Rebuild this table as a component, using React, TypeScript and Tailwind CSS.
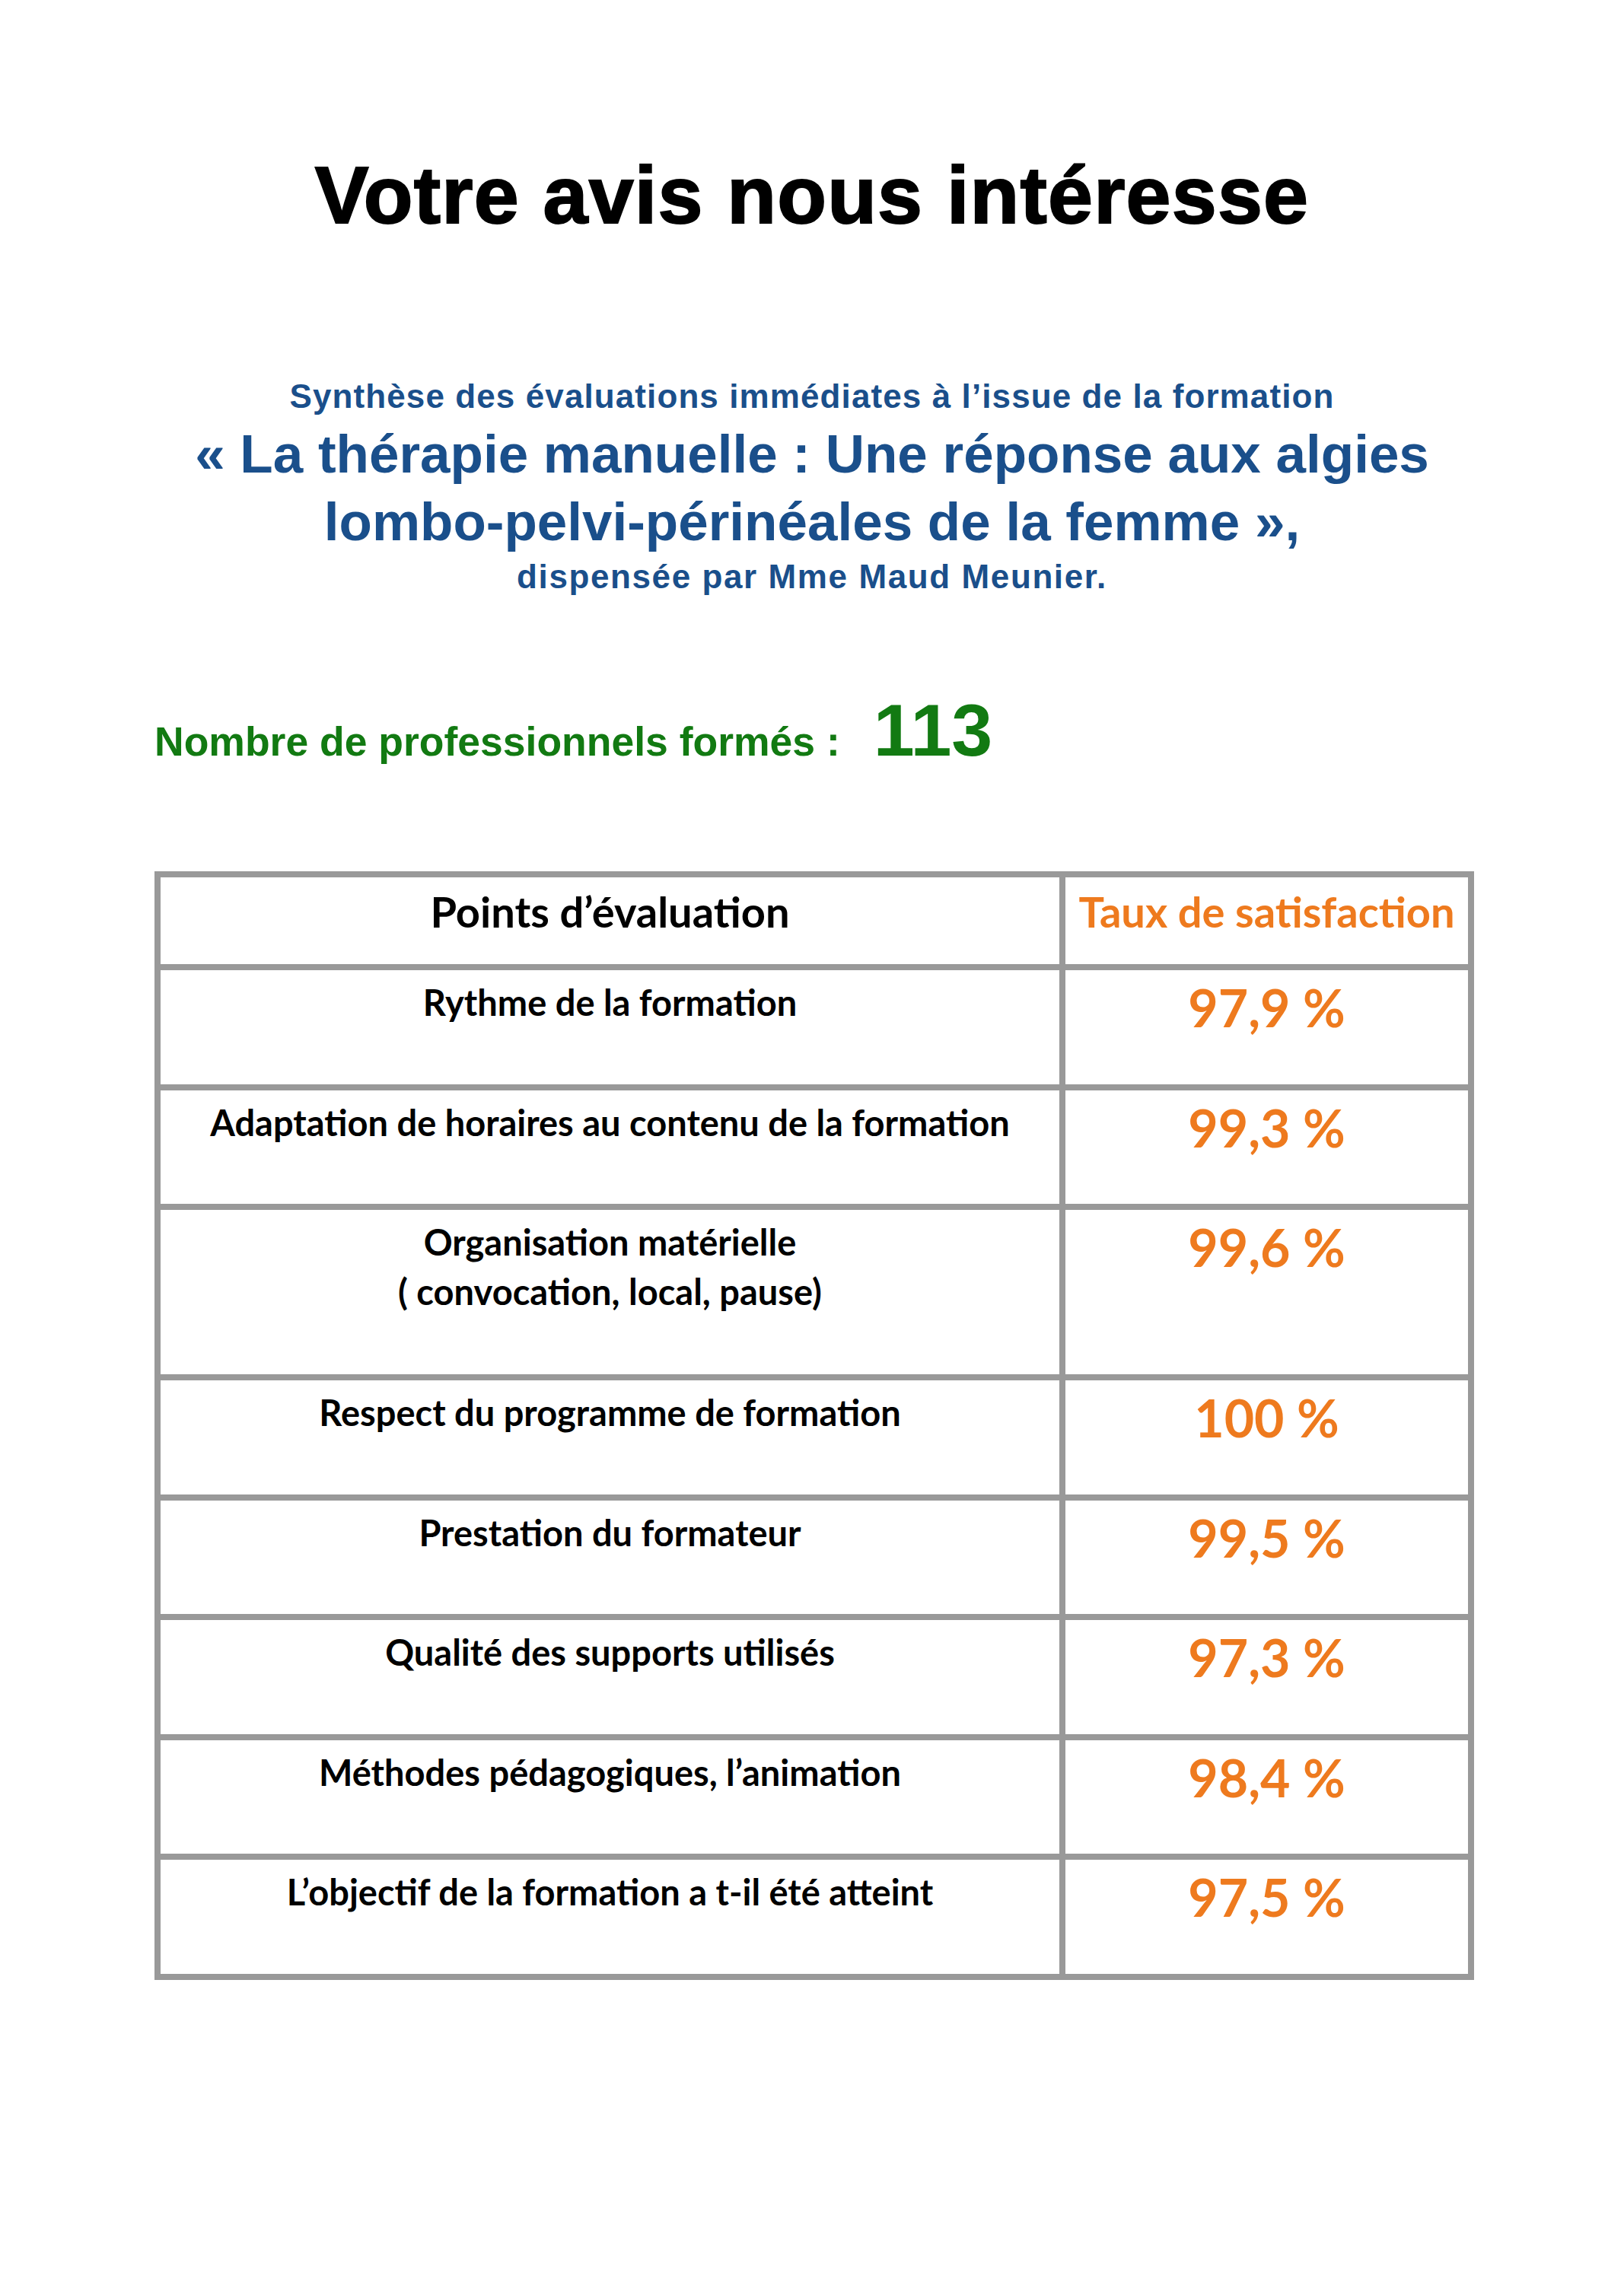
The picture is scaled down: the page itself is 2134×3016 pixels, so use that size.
const rows = [
  { label: ["Rythme de la formation"], value: "97,9 %", h: "h-[158px]" },
  { label: ["Adaptation de horaires au contenu de la formation"], value: "99,3 %", h: "h-[157px]" },
  { label: ["Organisation matérielle", "( convocation, local, pause)"], value: "99,6 %", h: "h-[224px]" },
  { label: ["Respect du programme de formation"], value: "100 %", h: "h-[158px]" },
  { label: ["Prestation du formateur"], value: "99,5 %", h: "h-[157px]" },
  { label: ["Qualité des supports utilisés"], value: "97,3 %", h: "h-[158px]" },
  { label: ["Méthodes pédagogiques, l’animation"], value: "98,4 %", h: "h-[157px]" },
  { label: ["L’objectif de la formation a t-il été atteint"], value: "97,5 %", h: "h-[150px]" },
];

export default function App() {
  return (
    <div className="min-h-[3016px] w-full bg-white font-['Liberation_Sans',Arial,sans-serif]">
      <header className="pt-[196px] text-center">
        <h1 className="text-[106px] leading-[120px] font-bold tracking-[1.2px] text-black [-webkit-text-stroke:2px_black]">
          Votre avis nous intéresse
        </h1>

        <div className="mt-[180px] font-bold text-[#1a4f8b]">
          <p className="text-[44px] leading-[50px] tracking-[1.1px]">
            Synthèse des évaluations immédiates à l’issue de la formation
          </p>
          <p className="mt-[6px] text-[71px] leading-[89px]">
            « La thérapie manuelle : Une réponse aux algies
            <br />
            lombo-pelvi-périnéales de la femme »,
          </p>
          <p className="mt-[3px] text-[44px] leading-[50px] tracking-[1.6px]">
            dispensée par Mme Maud Meunier.
          </p>
        </div>
      </header>

      <section className="ml-[203px] w-[1734px]">
        <div className="mt-[127px] flex items-baseline font-bold text-[#127a12]">
          <span className="text-[53.5px] leading-[100px]">Nombre de professionnels formés :</span>
          <span className="ml-[44px] text-[97px] leading-[100px]">113</span>
        </div>

        <div className="mt-[120px] border-[8px] border-[#999999] font-['Lato',sans-serif] font-bold">
          <div className="grid h-[122px] grid-cols-[1189px_529px] border-b-[8px] border-[#999999]">
            <div className="border-r-[8px] border-[#999999] pt-[12px] text-center text-[56px] leading-[65px] text-black">
              Points d’évaluation
            </div>
            <div className="whitespace-nowrap pt-[12px] text-center text-[56px] leading-[65px] text-[#ee7a1e]">
              Taux de satisfaction
            </div>
          </div>

          {rows.map((row, i) => (
            <div
              key={row.value + i}
              className={`grid grid-cols-[1189px_529px] ${row.h} ${
                i < rows.length - 1 ? "border-b-[8px] border-[#999999]" : ""
              }`}
            >
              <div className="border-r-[8px] border-[#999999] pt-[10px] text-center text-[47px] leading-[65px] text-black">
                {row.label.map((line) => (
                  <div key={line}>{line}</div>
                ))}
              </div>
              <div className="pt-[10px] text-center text-[68px] leading-[78px] text-[#ee7a1e]">
                {row.value}
              </div>
            </div>
          ))}
        </div>
      </section>
    </div>
  );
}
